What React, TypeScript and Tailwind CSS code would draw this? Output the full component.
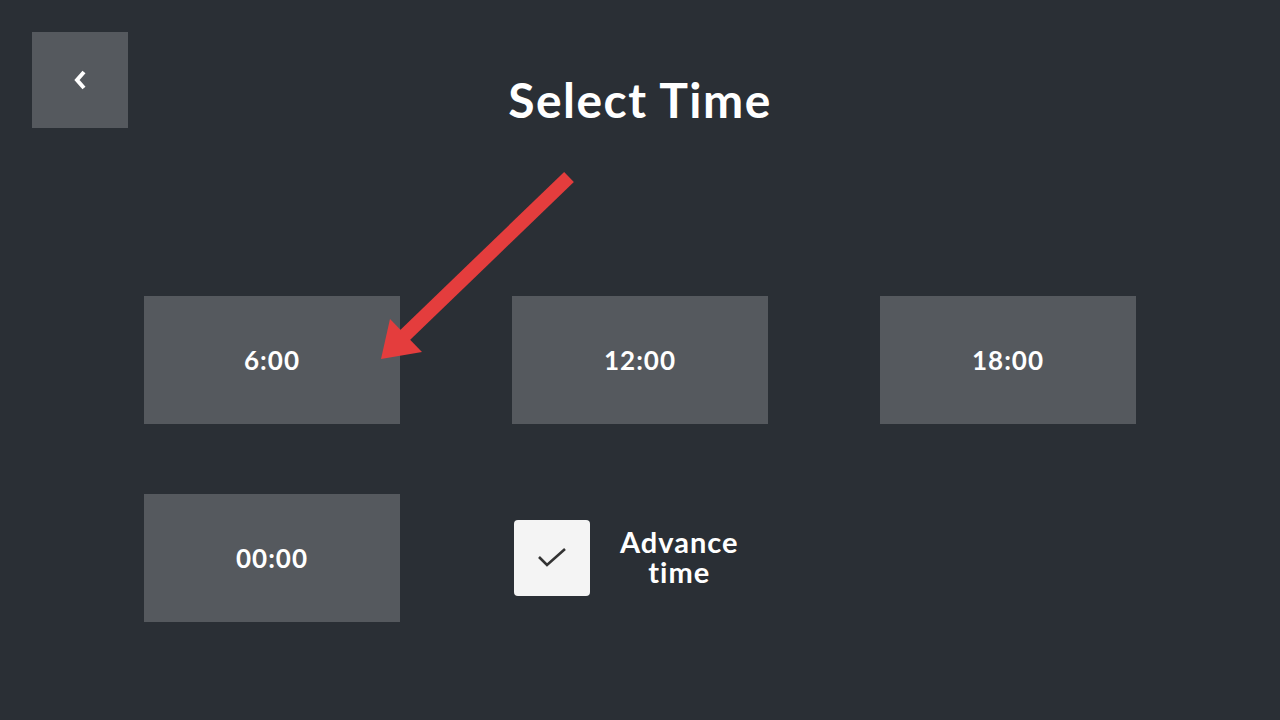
import { useState } from 'react'

const TIMES = ['6:00', '12:00', '18:00', '00:00']

function TimeButton({ label }: { label: string }) {
  return (
    <button className="w-[256px] h-[128px] bg-[#55595e] text-white text-[26px] font-bold tracking-[1px] flex items-center justify-center">
      {label}
    </button>
  )
}

export default function App() {
  const [advance, setAdvance] = useState(true)

  return (
    <div
      className="relative w-[1280px] h-[720px] bg-[#2a2f35] overflow-hidden"
      style={{ fontFamily: 'Lato, "Open Sans", sans-serif' }}
    >
      <div className="grid grid-cols-[96px_1fr_96px] items-start px-8 pt-8">
        <button className="w-[96px] h-[96px] bg-[#55595e] flex items-center justify-center">
          <svg width="16" height="22" viewBox="0 0 16 22" fill="none">
            <path d="M12 3 L5 11 L12 19" stroke="white" strokeWidth="4" strokeLinejoin="miter" />
          </svg>
        </button>
        <h1 className="text-center text-white text-[48px] font-bold leading-none tracking-[1.5px] mt-[44px]">
          Select Time
        </h1>
        <div />
      </div>

      <div className="ml-[144px] mt-[168px] grid grid-cols-[256px_256px_256px] gap-x-[112px] gap-y-[70px]">
        {TIMES.slice(0, 3).map(t => (
          <TimeButton key={t} label={t} />
        ))}
        <TimeButton label={TIMES[3]} />
        <div className="flex items-center pl-[2px] h-[128px]">
          <button
            onClick={() => setAdvance(a => !a)}
            className="w-[76px] h-[76px] rounded-[4px] bg-[#f4f4f4] flex items-center justify-center"
          >
            {advance && (
              <svg width="32" height="24" viewBox="0 0 32 24" fill="none">
                <path d="M3 11 L11 19 L29 3" stroke="#333" strokeWidth="2.6" />
              </svg>
            )}
          </button>
          <div className="ml-[30px] -mt-[3px] flex flex-col items-center text-white text-[29px] font-bold leading-[30px] tracking-[1px]">
            <span>Advance</span>
            <span>time</span>
          </div>
        </div>
      </div>

      <svg className="absolute left-0 top-0 pointer-events-none" width="1280" height="720">
        <line x1="569" y1="177" x2="402" y2="338" stroke="#e43d3d" strokeWidth="14" />
        <polygon points="381,359 390,319 422,352" fill="#e43d3d" />
      </svg>
    </div>
  )
}
